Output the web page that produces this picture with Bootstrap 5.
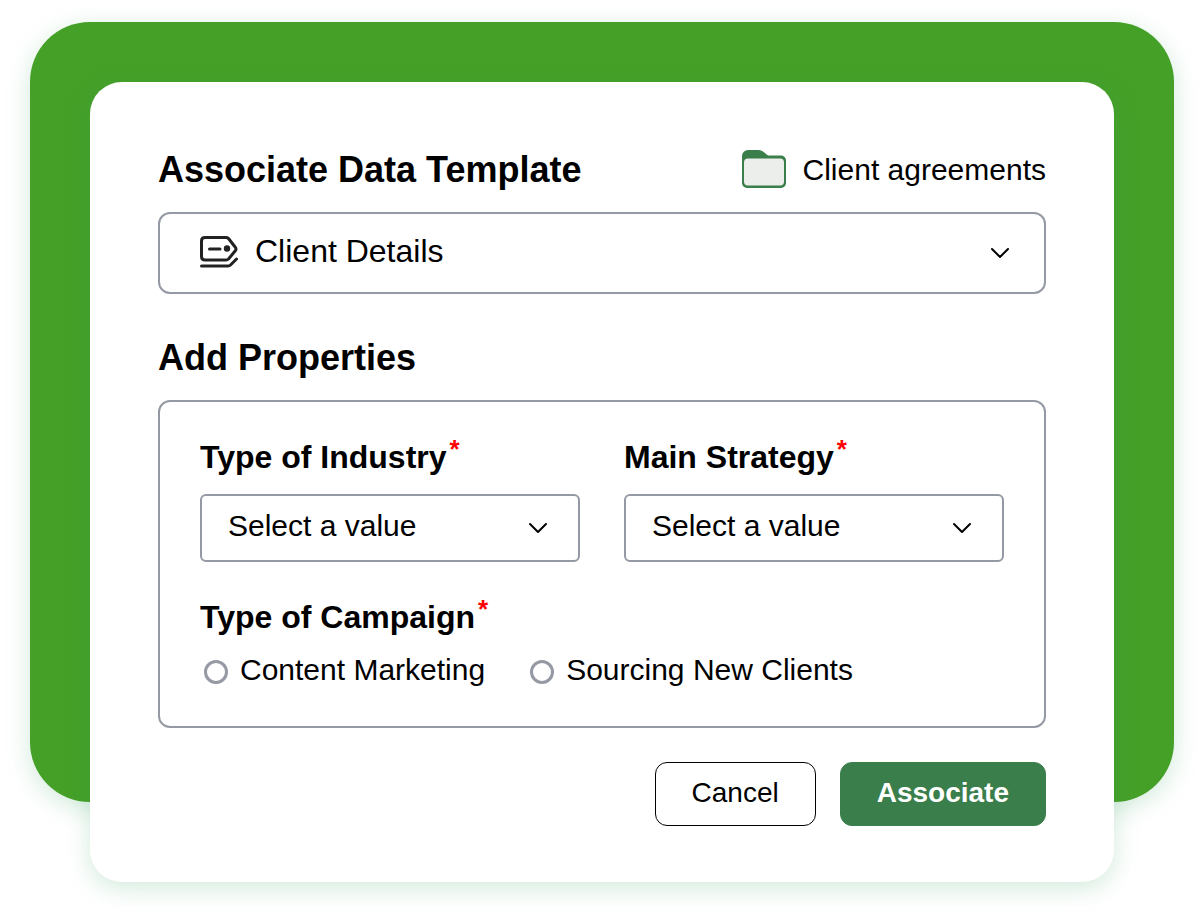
<!DOCTYPE html>
<html lang="en">
<head>
<meta charset="utf-8">
<meta name="viewport" content="width=device-width, initial-scale=1">
<title>Associate Data Template</title>
<link rel="stylesheet" href="https://cdn.jsdelivr.net/npm/bootstrap@5.3.0/dist/css/bootstrap.min.css">
<style>
  :root {
    --leaf: #45a028;
    --forest: #3a7e4b;
    --line: #9499a3;
    --glow: 0 6px 24px rgba(50, 160, 90, .22);
  }
  body {
    font-family: "Liberation Sans", Arial, sans-serif;
    color: #000;
    background: #fff;
  }
  .stage { padding: 22px 30px 38px; }
  .stage-grid { display: grid; }
  .stage-grid > * { grid-area: 1 / 1; }
  .backdrop {
    margin-bottom: 80px;
    background: var(--leaf);
    border-radius: 60px;
    box-shadow: var(--glow);
  }
  .dialog-card {
    margin: 60px 60px 0;
    padding: 68px 68px 56px;
    border-radius: 32px;
    box-shadow: var(--glow);
  }
  .heading { font-size: 36px; line-height: 40px; font-weight: 700; margin: 0; }
  .heading-row { margin-bottom: 22px; }
  .template-field { margin-bottom: 44px; }
  .folder-link { font-size: 30px; line-height: 40px; gap: 16px; color: #000; }
  .template-select, .value-select {
    color: #000;
    border: 2px solid var(--line);
    background-image: url("data:image/svg+xml,%3Csvg xmlns='http://www.w3.org/2000/svg' viewBox='0 0 20 12'%3E%3Cpath d='M2 2 10 10 18 2' fill='none' stroke='%23000' stroke-width='2' stroke-linecap='round' stroke-linejoin='round'/%3E%3C/svg%3E");
    background-size: 20px 12px;
  }
  .template-select {
    font-size: 32px;
    line-height: 36px;
    padding: 19px 64px 23px 95px;
    border-radius: 12px;
    background-position: right 34px center;
  }
  .template-icon { left: 42px; top: 24px; pointer-events: none; }
  .value-select {
    font-size: 30px;
    line-height: 36px;
    padding: 12px 60px 16px 26px;
    border-radius: 6px;
    background-position: right 30px center;
  }
  .properties {
    border: 2px solid var(--line);
    border-radius: 12px;
    padding: 35px 40px 38px;
    margin: 22px 0 34px;
  }
  .field-columns { --bs-gutter-x: 44px; --bs-gutter-y: 32px; }
  .field-label { font-size: 32px; line-height: 40px; font-weight: 700; margin: 0 0 17px; float: none; }
  .required { color: #f00; font-size: 26px; top: -10px; margin-left: 3px; }
  .campaign { margin-top: 35px; }
  .campaign .field-label { margin-bottom: 15px; }
  .choice-row { column-gap: 45px; row-gap: 12px; padding-left: 4px; font-size: 30px; line-height: 36px; }
  .choice { gap: 12px; }
  .choice-dot {
    width: 24px;
    height: 24px;
    border: 3px solid var(--line);
    margin: 4px 0 0;
    flex: none;
  }
  .action {
    font-size: 28px;
    line-height: 32px;
    padding: 14px 36px 16px;
    border-radius: 12px;
    border: 1px solid #000;
    color: #000;
  }
  .action-main { background: var(--forest); border-color: var(--forest); color: #fff; font-weight: 700; }
  .action:hover { color: #fff; background: #2f6a3e; }
</style>
</head>
<body>
<main class="stage">
  <div class="stage-grid">
    <div class="backdrop"></div>
    <form class="dialog-card bg-white position-relative">
      <div class="heading-row d-flex flex-wrap align-items-center justify-content-between">
        <h1 class="heading"><label for="template">Associate Data Template</label></h1>
        <a href="#" class="folder-link d-inline-flex align-items-start text-decoration-none">
          <svg width="45" height="38" viewBox="0 0 45 38" aria-hidden="true">
            <path d="M0 6a6 6 0 0 1 6-6h11q2 0 4 1.500L26 5.500h13a5 5 0 0 1 5 5v22.500a5 5 0 0 1-5 5H5a5 5 0 0 1-5-5z" fill="#3a7e4b"/>
            <rect x="2" y="8.500" width="40" height="27" rx="4" fill="#ebeeeb"/>
          </svg>
          <span>Client agreements</span>
        </a>
      </div>

      <div class="template-field position-relative">
        <select id="template" class="form-select template-select">
          <option>Client Details</option>
        </select>
        <svg class="template-icon position-absolute" width="38" height="32" viewBox="0 0 38 32" fill="none" stroke="#222" stroke-width="3" stroke-linecap="round" stroke-linejoin="round" aria-hidden="true">
          <path d="M5 1.500h21q1.500 0 2.500 1l7 9q1 1.500 0 3l-7 8.500q-1 1-2.500 1H5q-3.500 0-3.500-3.500V5Q1.500 1.500 5 1.500z"/>
          <path d="M9.500 13h10.500M1.500 30H28q1.500 0 2.500-1l6-6"/>
          <circle cx="27" cy="12.500" r="3.200" fill="#222" stroke="none"/>
        </svg>
      </div>

      <h2 class="heading">Add Properties</h2>
      <div class="properties">
        <div class="row row-cols-1 row-cols-md-2 field-columns">
          <div class="col">
            <label class="field-label d-block" for="industry">Type of Industry<sup class="required">*</sup></label>
            <select id="industry" class="form-select value-select">
              <option>Select a value</option>
            </select>
          </div>
          <div class="col">
            <label class="field-label d-block" for="strategy">Main Strategy<sup class="required">*</sup></label>
            <select id="strategy" class="form-select value-select">
              <option>Select a value</option>
            </select>
          </div>
        </div>
        <fieldset class="campaign">
          <legend class="field-label">Type of Campaign<sup class="required">*</sup></legend>
          <div class="choice-row d-flex flex-wrap">
            <div class="choice d-flex align-items-center">
              <input class="form-check-input choice-dot" type="radio" name="campaign" id="content">
              <label for="content">Content Marketing</label>
            </div>
            <div class="choice d-flex align-items-center">
              <input class="form-check-input choice-dot" type="radio" name="campaign" id="sourcing">
              <label for="sourcing">Sourcing New Clients</label>
            </div>
          </div>
        </fieldset>
      </div>

      <div class="d-flex flex-wrap justify-content-end gap-4">
        <button type="button" class="btn action">Cancel</button>
        <button type="submit" class="btn action action-main">Associate</button>
      </div>
    </form>
  </div>
</main>
<script src="https://cdn.jsdelivr.net/npm/bootstrap@5.3.0/dist/js/bootstrap.bundle.min.js"></script>
</body>
</html>
